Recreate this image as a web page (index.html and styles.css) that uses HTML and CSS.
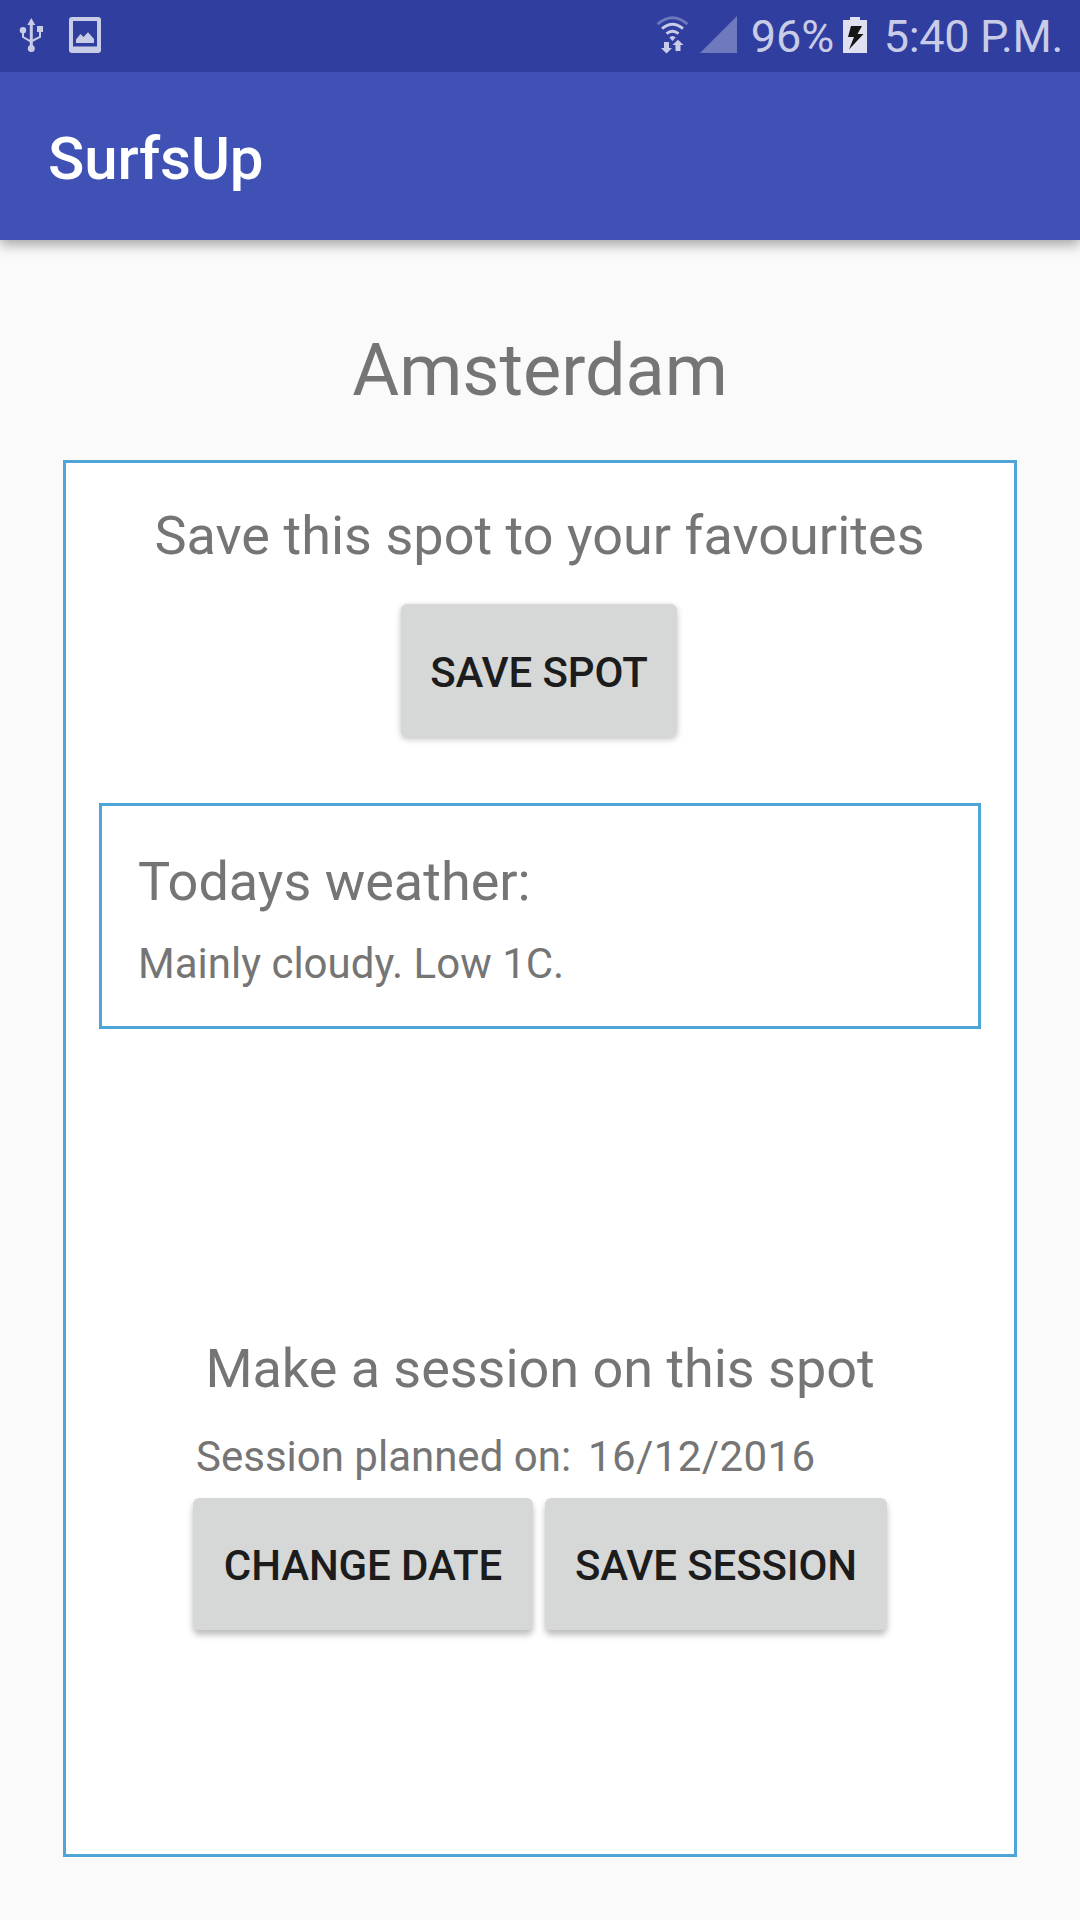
FILE: index.html
```html
<!DOCTYPE html>
<html lang="en">
<head>
<meta charset="utf-8">
<title>SurfsUp</title>
<link rel="stylesheet" href="styles.css">
</head>
<body>
<div class="status">
  <svg class="status-left" width="140" height="72" viewBox="0 0 140 72">
    <g fill="none" stroke="#c9cce7" stroke-width="2">
      <path d="M31.300 22V48" stroke-width="3"/>
      <path d="M23 30V37L31 41.500L40 37V29"/>
    </g>
    <path fill="#c9cce7" d="M31.300 18L35.300 25H27.300ZM37 26h6v6h-6z"/>
    <circle cx="23" cy="30.300" r="3.200" fill="#c9cce7"/>
    <circle cx="31.300" cy="48.600" r="3.500" fill="#c9cce7"/>
    <path fill="#c9cce7" fill-rule="evenodd" d="M72 17H98Q101 17 101 20V50Q101 53 98 53H72Q69 53 69 50V20Q69 17 72 17ZM73 21V46.500H97V21Z"/>
    <path fill="#c9cce7" d="M76 43V39.500L80.500 34L83.500 37L88 32.200L94 39V43Z"/>
  </svg>
  <div class="status-right">
    <svg width="84" height="72" viewBox="0 0 84 72">
      <g fill="none" stroke="#c9cce7" stroke-width="2.900">
        <path d="M1.600 24.200Q16.500 11.500 31.400 24.200" stroke="#6e78bf"/>
        <path d="M6 28.700Q16.500 19.800 27 28.700"/>
        <path d="M10.500 33.700Q16.500 28.700 22.500 33.700"/>
      </g>
      <path fill="#c9cce7" d="M13.300 37.500Q16.500 34.500 19.700 37.500L16.500 41ZM8 42H13V48H16L10.500 53.500L5 48H8ZM19.500 51V45H16.500L22 39.700L27.500 45H24.500V51Z"/>
      <path fill="#6f79bd" d="M44 53L81 16V53Z"/>
    </svg>
    <span class="percent">96%</span>
    <svg class="battery" width="24" height="72" viewBox="0 0 24 72">
      <path fill="#dfe1f1" d="M0 20H7V17H17V20H24V53H0Z"/>
      <path fill="#151515" d="M8 26H19L14.500 34H20.500L6 49.500L11 37H5Z"/>
    </svg>
    <span class="time">5:40 P.M.</span>
  </div>
</div>
<header class="appbar">SurfsUp</header>
<main>
  <h1>Amsterdam</h1>
  <section class="panel">
    <h2 class="favourites">Save this spot to your favourites</h2>
    <button class="btn save-spot">SAVE SPOT</button>
    <div class="weather">
      <h2>Todays weather:</h2>
      <p>Mainly cloudy. Low 1C.</p>
    </div>
    <h2 class="make">Make a session on this spot</h2>
    <div class="session">
      <div class="planned"><span>Session planned on:</span><span class="date">16/12/2016</span></div>
      <div class="buttons">
        <button class="btn low change">CHANGE DATE</button>
        <button class="btn low save">SAVE SESSION</button>
      </div>
    </div>
  </section>
</main>
</body>
</html>
```

FILE: styles.css
```css
* { box-sizing: border-box; }
body {
  margin: 0;
  width: 1080px;
  height: 1920px;
  overflow: hidden;
  background: #fafafa;
  color: #757575;
  font-family: Roboto, sans-serif;
}
h1, h2, p { margin: 0; font-weight: 400; white-space: nowrap; }
svg { display: block; }
.status {
  position: relative;
  z-index: 1;
  display: flex;
  justify-content: space-between;
  height: 72px;
  background: #303f9f;
  color: #c9cce7;
  font-size: 45px;
  line-height: 74px;
}
.status-right { display: flex; padding-right: 17px; white-space: nowrap; }
.percent { width: 83px; margin-left: 11px; margin-right: 9px; }
.battery { margin-right: 17px; }
.time { letter-spacing: -.33px; }
.appbar {
  height: 168px;
  padding: 52px 48px 0;
  background: #3f51b5;
  box-shadow: 0 5px 12px rgba(0, 0, 0, .34);
  color: #fff;
  font-size: 60px;
  font-weight: 500;
  letter-spacing: -.15px;
  line-height: 70px;
}
main { padding: 89px 63px 0; }
h1 {
  height: 131px;
  font-size: 72px;
  line-height: 84px;
  text-align: center;
}
h2 { font-size: 54px; line-height: 64px; text-align: center; }
p { font-size: 42px; line-height: 50px; }
.panel {
  display: flex;
  flex-direction: column;
  align-items: center;
  height: 1397px;
  padding: 41px 33px 0;
  border: 3px solid #50a5d8;
  background: #fff;
}
.favourites { margin-right: 1px; letter-spacing: .03px; }
.btn {
  height: 132px;
  padding: 4px 0 0;
  border: 0;
  border-radius: 6px;
  background: #d6d8d7;
  box-shadow: 0 2px 6px rgba(0, 0, 0, .25);
  color: #1c1c1c;
  font: 500 42px/50px Roboto, sans-serif;
  letter-spacing: -.12px;
  white-space: nowrap;
}
.btn.low { box-shadow: 0 5px 6px rgba(0, 0, 0, .26); }
.save-spot { width: 276px; height: 133px; margin-top: 36px; margin-right: 2px; }
.weather {
  align-self: stretch;
  height: 226px;
  margin-top: 66px;
  padding: 44px 36px 0;
  border: 3px solid #50a5d8;
}
.weather h2 { text-align: left; }
.weather p { margin-top: 25px; }
.make { margin-top: 308px; letter-spacing: -.03px; }
.session { width: 694px; margin-top: 31px; }
.planned {
  display: flex;
  gap: 17px;
  padding-left: 3px;
  font-size: 42px;
  line-height: 50px;
  white-space: nowrap;
}
.date { letter-spacing: .4px; }
.buttons { display: flex; gap: 12px; margin-top: 16px; }
.change { width: 340px; }
.save { width: 342px; }
```
